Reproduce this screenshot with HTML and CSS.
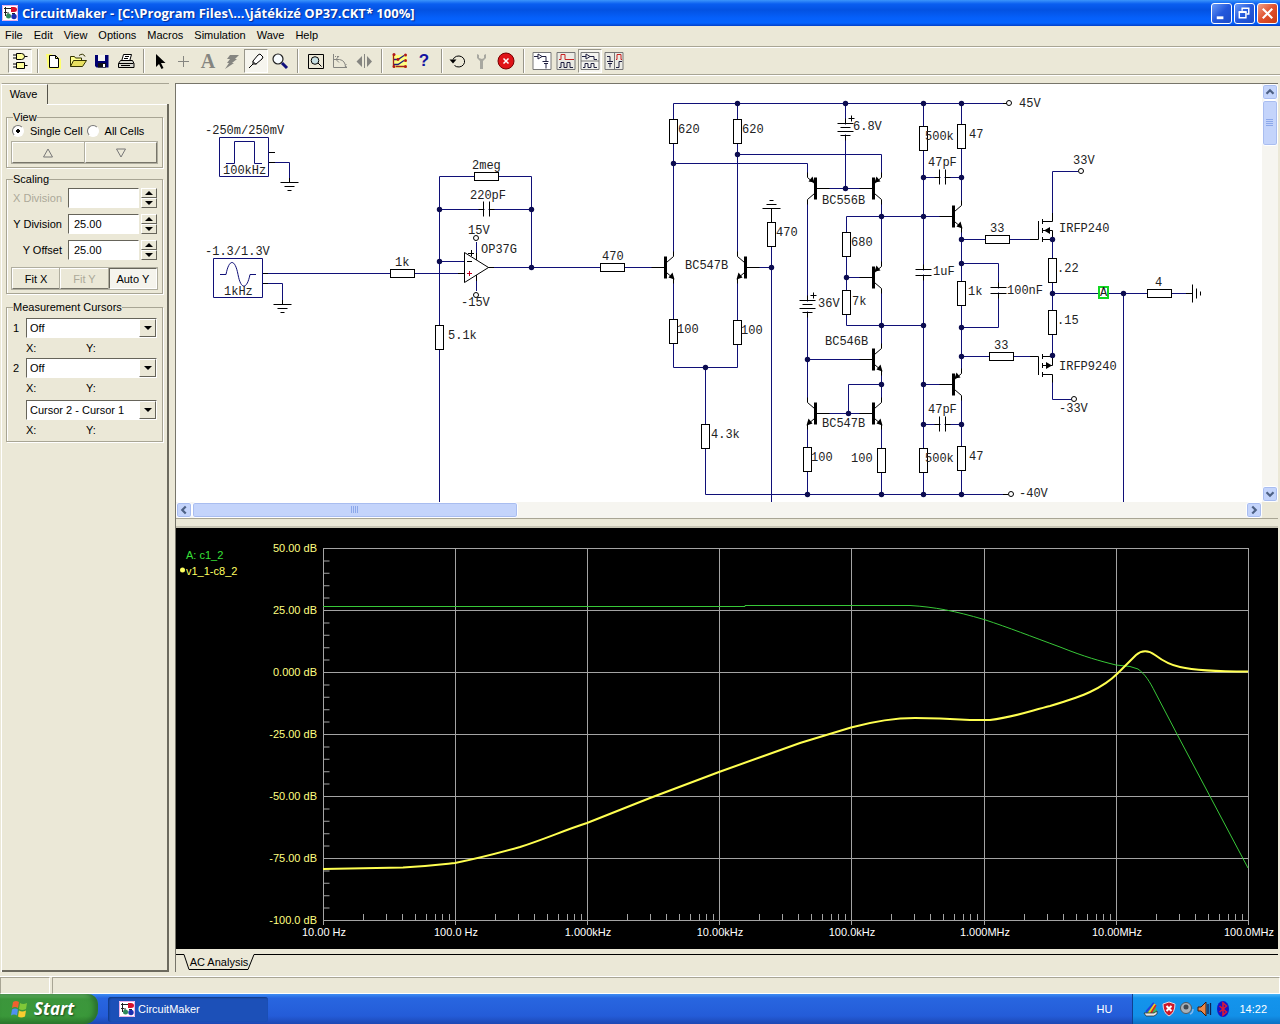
FILE: index.html
```html
<!DOCTYPE html>
<html lang="en">
  <head>
    <meta charset="utf-8" />
    <title>CircuitMaker</title>
    <link rel="stylesheet" href="styles.css">
  </head>

  <body>
    <!-- shared symbols -->
    <svg class="defs" width="0" height="0" aria-hidden="true">
      <defs>
        <symbol id="app" viewBox="0 0 16 16">
          <rect width="16" height="16" fill="#fff" />
          <path d="M0.5 0.5h15v15h-15z" fill="none" stroke="#e8b0e8" />
          <path d="M2 3.500h7M3.500 2v9M2 7.500h3M6 7v6M10 8.500h3" fill="none" stroke="#222" />
          <path d="M9 2h3q3 0 3 2.500t-3 2.500h-3z" fill="#d8102c" />
          <circle cx="6.500" cy="11" r="2.500" fill="#2d8a5a" />
          <circle cx="12" cy="11.500" r="2.700" fill="#1a2fb0" />
        </symbol>
        <!-- origin of the parts is their middle, transistors use the bar -->
        <g id="rh"><rect x="-12" y="-4" width="24" height="8" fill="#fff" stroke="#000" /></g>
        <g id="rv"><rect x="-4" y="-12" width="8" height="24" fill="#fff" stroke="#000" /></g>
        <g id="ch"><path d="M-2 0h4" stroke="#fff" stroke-width="3" /><path d="M-3-8v15M3-8v15M-8 0h5M3 0h5" stroke="#000" /></g>
        <g id="cv"><path d="M0-2v4" stroke="#fff" stroke-width="3" /><path d="M-8-3h16M-8 3h16M0-8v5M0 3v5" stroke="#000" /></g>
        <g id="bat"><path d="M0-5v10" stroke="#fff" stroke-width="3" /><path d="M-8-6h16M-5-2h10M-8 2h16M-5 6h10M0-11v5M0 6v5M3-11h6M6-14v6" stroke="#000" /></g>
        <g id="gnd"><path d="M-9 0h18M-5 4h10M-2 8h4" stroke="#000" /></g>
        <g id="npn"><path d="M-14 0h14M1-5l7-6v-5M1 5l7 6v5" fill="none" stroke="#000" /><path d="M0-11v22" stroke="#000" stroke-width="3" /><path d="M9 12l-6-2 4-5z" /></g>
        <g id="pnp"><path d="M-14 0h14M1-5l7-6v-5M1 5l7 6v5" fill="none" stroke="#000" /><path d="M0-11v22" stroke="#000" stroke-width="3" /><path d="M1-6l6-1-4-5z" /></g>
        <circle id="dot" r="2.700" fill="#0c0c50" />
        <circle id="term" r="2.500" fill="#fff" stroke="#000" />
        <path id="decade" d="M40 914v6M63 914v6M79 914v6M92 914v6M103 914v6M112 914v6M119 914v6M126 914v6" />
      </defs>
    </svg>

    <header class="titlebar">
      <svg class="app-icon" viewBox="0 0 16 16"><use href="#app" /></svg>
      <h1>CircuitMaker - [C:\Program Files\...\játékizé OP37.CKT* 100%]</h1>
      <button class="win" aria-label="Minimize"><svg viewBox="0 0 20 20"><path d="M5 14.500h7" stroke="#fff" stroke-width="3" /></svg></button>
      <button class="win" aria-label="Restore"><svg viewBox="0 0 20 20" fill="none" stroke="#fff"><path d="M7.500 7V4.500h7v6H12" stroke-width="1.500" /><path d="M4.500 8.500h7v6h-7z" stroke-width="1.500" /><path d="M4 8.500h8" stroke-width="2" /></svg></button>
      <button class="win close" aria-label="Close"><svg viewBox="0 0 20 20"><path d="M5 5l10 10M15 5L5 15" stroke="#fff" stroke-width="2.200" /></svg></button>
    </header>

    <nav class="menubar">
      <a href="#">File</a>
      <a href="#">Edit</a>
      <a href="#">View</a>
      <a href="#">Options</a>
      <a href="#">Macros</a>
      <a href="#">Simulation</a>
      <a href="#">Wave</a>
      <a href="#">Help</a>
    </nav>

    <div class="toolbar">
      <button class="tool on" aria-label="Parts"><svg viewBox="0 0 20 20" fill="#ffff9c" stroke="#000"><path d="M6.500 2.500h5q3 0 3 3t-3 3h-5zM6.500 11.500h8v6h-8zM3 4h3.500M3 7h3.500M14.500 5.500h3M3 13h3.500M3 16h3.500M14.500 14.500h3" /></svg></button>
      <span class="sep"></span>
      <button class="tool" aria-label="New"><svg viewBox="0 0 20 20"><path d="M2 3h5l10 5v10H4z" fill="#ffff70" /><path d="M5.500 4.500h6l3 3v9h-9zM11.500 4.500v3h3" fill="#fff" stroke="#000" /></svg></button>
      <button class="tool" aria-label="Open"><svg viewBox="0 0 20 20" stroke="#333300"><path d="M2.500 15.500v-10h4l1 1.500h6v3" fill="#ffff90" /><path d="M2.500 15.500l3-6h13l-4 6z" fill="#e8e060" /><path d="M11 4.500q4-3 6 1" fill="none" /></svg></button>
      <button class="tool" aria-label="Save"><svg viewBox="0 0 20 20"><path d="M3 4h13.500v12.500H4.500L3 15z" fill="#000070" /><path d="M6 4h7v6H6z" fill="#f4f4f0" /><path d="M6 12h8v4.500H6z" fill="#101018" /><path d="M11 13h2v3h-2z" fill="#fff" /></svg></button>
      <button class="tool" aria-label="Print"><svg viewBox="0 0 20 20" fill="#fff" stroke="#000"><path d="M5.500 10.500l2-7h8l-2 7zM9 5.500h4M8 7.500h4" /><path d="M2.500 12.500l2-3h12l1.500 3v4h-15.500z" fill="#d8d8d0" /><path d="M2.500 12.500h15M5 14.500h9" /></svg></button>
      <span class="sep"></span>
      <button class="tool" aria-label="Select"><svg viewBox="0 0 20 20"><path d="M6 3v13l3-3 2.500 5 2-1-2.500-5h4.500z" /></svg></button>
      <button class="tool" aria-label="Wire"><svg viewBox="0 0 20 20"><path d="M9.500 5v11M4 10.500h11" stroke="#858580" /></svg></button>
      <button class="tool letter" aria-label="Text">A</button>
      <button class="tool" aria-label="Delete"><svg viewBox="0 0 20 20"><path d="M8 4h9l-4 4h2l-5 4h2l-9 6 4-6H5l3-4H5z" fill="#858580" /></svg></button>
      <button class="tool on" aria-label="Probe"><svg viewBox="0 0 20 20" fill="#fff" stroke="#000"><path d="M3 17l4-4v-3l5-6 2-1 3 3-1 2-6 5H7z" /><path d="M7 10.500l3 3" /></svg></button>
      <button class="tool" aria-label="Zoom"><svg viewBox="0 0 20 20"><circle cx="8" cy="8" r="5" fill="#f8fcff" stroke="#222" stroke-width="1.200" /><path d="M12 12l5 5" stroke="#10107c" stroke-width="3" /></svg></button>
      <span class="sep wide"></span>
      <button class="tool" aria-label="Fit"><svg viewBox="0 0 20 20" fill="none" stroke="#000"><path d="M2.500 3.500h15v14h-15zM12 12l3.500 3.500" /><circle cx="9" cy="9.500" r="3.800" fill="#c8e0e4" /></svg></button>
      <button class="tool" aria-label="Rotate"><svg viewBox="0 0 20 20" fill="none" stroke="#858580"><path d="M3.500 3v13.500H17M3.500 8.500h6M9.500 8.500q6 1 6 8M9 5L6 8.500l3 3" /><path d="M5 5.500h4M16 13v4" stroke-dasharray="1 1" /></svg></button>
      <button class="tool" aria-label="Mirror"><svg viewBox="0 0 20 20" fill="#858580"><path d="M8 5v11l-5.500-5.500zM13 5v11l5-5.500zM10 3h1v14h-1z" /></svg></button>
      <span class="sep wide"></span>
      <button class="tool" aria-label="Netlist"><svg viewBox="0 0 20 20" fill="none"><path d="M2 4h15v13H3z" fill="#ffff80" /><path d="M4 8.500h4l6-4M4 13.500h4l6-4" stroke="#202080" stroke-width="1.300" /><path d="M3.500 4v11M6 15.500h9" stroke="#a02020" stroke-width="1.300" /><g fill="#b01818"><circle cx="4" cy="3.500" r="1.500" /><circle cx="15.500" cy="4" r="1.500" /><circle cx="8" cy="8.500" r="1.400" /><circle cx="15.500" cy="9.500" r="1.500" /><circle cx="4" cy="15.500" r="1.500" /><circle cx="15.500" cy="15.500" r="1.500" /></g></svg></button>
      <button class="tool help" aria-label="Help">?</button>
      <span class="sep"></span>
      <button class="tool" aria-label="Reset"><svg viewBox="0 0 20 20" fill="none" stroke="#000"><path d="M5 8.500a6 5.500 0 1 1 1.500 6" /><path d="M1.500 8.500h7l-3.500 4z" fill="#000" stroke="none" /></svg></button>
      <button class="tool" aria-label="Setup"><svg viewBox="0 0 20 20"><path d="M5 3v4l3 3v8h3v-8l3-3V3l-2 1v3l-2 1-3-1V4z" fill="#a8a8a0" /></svg></button>
      <button class="tool" aria-label="Stop"><svg viewBox="0 0 20 20"><circle cx="10" cy="10" r="8" fill="#e01418" stroke="#700" /><path d="M7.500 7.500l5 5M12.500 7.500l-5 5" stroke="#fff" stroke-width="1.500" /></svg></button>
      <span class="sep wide"></span>
      <button class="tool" aria-label="Schematic"><svg viewBox="0 0 20 20" fill="none" stroke="#202040"><path d="M1 1.500h18v17H1z" fill="#fff" stroke="#777" /><path d="M2 5.500h4M6 3v5l4-2.500zM10 5.500h4v5M10.500 10.500h6M12 12.500h4M14 12.500v5" /></svg></button>
      <button class="tool" aria-label="Waves"><svg viewBox="0 0 20 20" fill="none" stroke="#202040"><path d="M1 1.500h18v17H1z" fill="#ebebe4" stroke="#777" /><path d="M3 8.500h2v-5h4v5h9" stroke="#c82020" /><path d="M3 16.500h2v-5h3v5h3v-5h3v5h3" /></svg></button>
      <button class="tool on" aria-label="Split horizontal"><svg viewBox="0 0 20 20" fill="none" stroke="#202040"><path d="M1 1.500h18v17H1zM1 10h18" fill="#f4f4f0" stroke="#777" /><path d="M2 5.500h4M6 3v5l4-2.500zM10 5.500h4v3h3M3 16.500h2v-4h3v4h3v-4h3v4h3" /></svg></button>
      <button class="tool" aria-label="Split vertical"><svg viewBox="0 0 20 20" fill="none" stroke="#202040"><path d="M1 1.500h18v17H1zM10.500 1.500v17" fill="#ebebe4" stroke="#777" /><path d="M3 5.500h3v5M3 10.500h6M4 12.500h4M6 12.500v4M12 16.500h3v-6h3" /><path d="M12 8.500h1v-5h4v5h1" stroke="#c82020" /></svg></button>
    </div>

    <main class="workspace">
      <aside class="side">
        <div class="tabrow"><button class="tab">Wave</button></div>
        <div class="page">
          <fieldset class="view">
            <legend>View</legend>
            <div class="radios">
              <label><input type="radio" name="cell" checked> Single Cell</label>
              <label><input type="radio" name="cell"> All Cells</label>
            </div>
            <div class="buttons">
              <button class="btn" aria-label="Previous cell"><svg viewBox="0 0 12 12"><path d="M6 2l4.500 8h-9z" fill="none" stroke="#777" /></svg></button>
              <button class="btn" aria-label="Next cell"><svg viewBox="0 0 12 12"><path d="M6 10l4.500-8h-9z" fill="none" stroke="#777" /></svg></button>
            </div>
          </fieldset>

          <fieldset class="scaling">
            <legend>Scaling</legend>
            <div class="row off"><label for="xdiv">X Division</label><input id="xdiv" type="text"><span class="spin"><button aria-label="X up"><i class="up"></i></button><button aria-label="X down"><i class="down"></i></button></span></div>
            <div class="row"><label for="ydiv">Y Division</label><input id="ydiv" type="text" value="25.00"><span class="spin"><button aria-label="Y up"><i class="up"></i></button><button aria-label="Y down"><i class="down"></i></button></span></div>
            <div class="row"><label for="yoff">Y Offset</label><input id="yoff" type="text" value="25.00"><span class="spin"><button aria-label="Offset up"><i class="up"></i></button><button aria-label="Offset down"><i class="down"></i></button></span></div>
            <div class="buttons">
              <button class="btn">Fit X</button>
              <button class="btn" disabled>Fit Y</button>
              <button class="btn pressed">Auto Y</button>
            </div>
          </fieldset>

          <fieldset class="cursors">
            <legend>Measurement Cursors</legend>
            <div class="cursor"><label for="c1">1</label><span class="combo"><select id="c1"><option>Off</option></select><span class="arrow"><i class="down"></i></span></span></div>
            <div class="xy"><span>X:</span><span>Y:</span></div>
            <div class="cursor"><label for="c2">2</label><span class="combo"><select id="c2"><option>Off</option></select><span class="arrow"><i class="down"></i></span></span></div>
            <div class="xy last"><span>X:</span><span>Y:</span></div>
            <div class="cursor"><span></span><span class="combo"><select aria-label="Difference"><option>Cursor 2 - Cursor 1</option></select><span class="arrow"><i class="down"></i></span></span></div>
            <div class="xy"><span>X:</span><span>Y:</span></div>
          </fieldset>
        </div>
      </aside>

      <section class="docs">
        <div class="schematic">
          <div class="canvas">
            <svg width="1085" height="418" viewBox="176 84 1085 418" fill="none">
              <!-- wires -->
              <g class="wire">
                <path d="M219.500 137.500h49v39h-49zM226 163.500h8.500v-22h20v22h7.500M213.500 258.500h49v39h-49zM220 274.500h6c3-16 9-16 12 0s9 15 12 0h6" />
                <path d="M275 162.500h14.500v16M268 273.500H458M268 283.500h14.500v17" />
                <path d="M439.500 502V176.500H531.500V267.500M439.500 209.500H531.500M439.500 261.500H464M494 267.500H652M476.500 242v12M476.500 281v10" />
                <path d="M673.500 252V103.500H1003M737.500 103.500V252M673.500 163.500H807.500v10M737.500 154.500H881.500V173" />
                <path d="M673.500 283V367.500H737.500V283M705.500 367.500V494.500H1003M759 267.500H771.500M771.500 220V502" />
                <path d="M807.500 203V398M807.500 429V494.500M845.500 103.500V188.500M829 188.500H860" />
                <path d="M881.500 203V262M881.500 292V344M881.500 375V398M881.500 429V494.500M846.500 325.500V216.500H940M846.500 277.500H860M846.500 325.500H923.500" />
                <path d="M807.500 359.500H860M829 413.500H860M848.500 413.500V384.500H881.500" />
                <path d="M923.500 103.500V494.500M961.500 103.500V201M961.500 232V369M961.500 399V494.500M923.500 177.500H961.500M923.500 424.500H961.500M923.500 384.500H940" />
                <path d="M961.500 263.500H998.500V327.500H961.500M961.500 239.500H1030M961.500 356.500H1030" />
                <path d="M1078 171.500H1052.500V213M1052.500 240V356M1052.500 382V399.500H1071M1052.500 293.500H1186M1123.500 293.500V502" />
              </g>
              <!-- pins and parts -->
              <path d="M269 152.500h6M269 162.500h6M289.500 178v5M263 273.500h5M263 283.500h5M282.500 300v5M458 273.500h6M488 267.500h6M476.500 253v7M476.500 275v6M652 267.500h5M771.500 209v13M1003 103.500h4M1003 494.500h5M1186 293.500h6" stroke="#000" />
              <use href="#gnd" x="289.500" y="182.500" />
              <use href="#gnd" x="282.500" y="304.500" />
              <use href="#gnd" transform="translate(771.500 208.500) scale(1 -1)" />
              <use href="#gnd" transform="translate(1192.500 293.500) rotate(-90)" />
              <path d="M464.500 252.500v30l24-15z" fill="#fff" stroke="#000" />
              <path d="M468 253.500h6M471.500 250v6M467 261.500h5" stroke="#000" />
              <path d="M467 273.500h5M469.500 271v5" stroke="#c00020" />

              <use href="#rh" x="402.500" y="273.500" /><use href="#rh" x="486.500" y="176.500" /><use href="#rh" x="612.500" y="267.500" />
              <use href="#rh" x="997.500" y="239.500" /><use href="#rh" x="1001.500" y="356.500" /><use href="#rh" x="1159.500" y="293.500" />
              <use href="#rv" x="439.500" y="337.500" /><use href="#rv" x="673.500" y="131.500" /><use href="#rv" x="737.500" y="131.500" />
              <use href="#rv" x="673.500" y="331.500" /><use href="#rv" x="737.500" y="332.500" /><use href="#rv" x="705.500" y="436.500" />
              <use href="#rv" x="771.500" y="234.500" /><use href="#rv" x="846.500" y="244.500" /><use href="#rv" x="846.500" y="302.500" />
              <use href="#rv" x="807.500" y="459.500" /><use href="#rv" x="881.500" y="460.500" />
              <use href="#rv" x="923.500" y="138.500" /><use href="#rv" x="961.500" y="136.500" /><use href="#rv" x="961.500" y="293.500" />
              <use href="#rv" x="923.500" y="460.500" /><use href="#rv" x="961.500" y="458.500" />
              <use href="#rv" x="1052.500" y="270.500" /><use href="#rv" x="1052.500" y="322.500" />
              <use href="#ch" x="486.500" y="209.500" /><use href="#ch" x="942.500" y="177.500" /><use href="#ch" x="942.500" y="424.500" />
              <use href="#cv" x="923.500" y="272.500" /><use href="#cv" x="998.500" y="290.500" />
              <use href="#bat" x="845.500" y="129.500" /><use href="#bat" x="807.500" y="306.500" />

              <g fill="#000">
                <use href="#npn" x="665.500" y="267.500" />
                <use href="#npn" transform="translate(745.500 267.500) scale(-1 1)" />
                <use href="#pnp" transform="translate(815.500 188.500) scale(-1 1)" />
                <use href="#pnp" x="873.500" y="188.500" />
                <use href="#pnp" x="873.500" y="277.500" />
                <use href="#npn" x="873.500" y="359.500" />
                <use href="#npn" x="873.500" y="413.500" />
                <use href="#npn" transform="translate(815.500 413.500) scale(-1 1)" />
                <use href="#npn" x="953.500" y="216.500" />
                <use href="#pnp" x="953.500" y="384.500" />
              </g>
              <!-- mosfets -->
              <path d="M1030 239.500h8.500V221M1042.500 219v5M1042.500 228v5M1042.500 237v5M1042 221.500h10.500V213M1042 230.500h10.500v9M1042 239.500h10.500M1030 356.500h8.500V375M1042.500 354v5M1042.500 363v5M1042.500 372v5M1042 356.500h10.500v9h-10.500M1042 374.500h10.500v8" stroke="#000" />
              <path d="M1044 230.500l6-3.500v7zM1052 365.500l-6-3.500v7z" fill="#000" />

              <use href="#dot" x="439.500" y="209.500" /><use href="#dot" x="531.500" y="209.500" /><use href="#dot" x="439.500" y="261.500" /><use href="#dot" x="531.500" y="267.500" />
              <use href="#dot" x="737.500" y="103.500" /><use href="#dot" x="845.500" y="103.500" /><use href="#dot" x="923.500" y="103.500" /><use href="#dot" x="961.500" y="103.500" />
              <use href="#dot" x="737.500" y="154.500" /><use href="#dot" x="673.500" y="163.500" /><use href="#dot" x="771.500" y="267.500" /><use href="#dot" x="705.500" y="367.500" />
              <use href="#dot" x="845.500" y="188.500" /><use href="#dot" x="923.500" y="177.500" /><use href="#dot" x="961.500" y="177.500" /><use href="#dot" x="881.500" y="216.500" />
              <use href="#dot" x="923.500" y="216.500" /><use href="#dot" x="846.500" y="277.500" /><use href="#dot" x="961.500" y="239.500" /><use href="#dot" x="961.500" y="263.500" />
              <use href="#dot" x="881.500" y="325.500" /><use href="#dot" x="923.500" y="325.500" /><use href="#dot" x="961.500" y="327.500" /><use href="#dot" x="961.500" y="356.500" />
              <use href="#dot" x="807.500" y="359.500" /><use href="#dot" x="881.500" y="384.500" /><use href="#dot" x="923.500" y="384.500" /><use href="#dot" x="848.500" y="413.500" />
              <use href="#dot" x="923.500" y="424.500" /><use href="#dot" x="961.500" y="424.500" /><use href="#dot" x="807.500" y="494.500" /><use href="#dot" x="881.500" y="494.500" />
              <use href="#dot" x="923.500" y="494.500" /><use href="#dot" x="961.500" y="494.500" /><use href="#dot" x="1052.500" y="239.500" /><use href="#dot" x="1052.500" y="293.500" />
              <use href="#dot" x="1052.500" y="355.500" /><use href="#dot" x="1123.500" y="293.500" />
              <use href="#term" x="476" y="238" /><use href="#term" x="476" y="295" /><use href="#term" x="1009" y="103" /><use href="#term" x="1011" y="494" />
              <use href="#term" x="1081" y="171" /><use href="#term" x="1074" y="399" />
              <rect x="1099" y="287" width="9" height="11" fill="#fff" stroke="#10d820" stroke-width="2" />

              <g class="part-text">
                <text x="205" y="134">-250m/250mV</text><text x="223" y="174">100kHz</text>
                <text x="205" y="255">-1.3/1.3V</text><text x="224" y="295">1kHz</text>
                <text x="395" y="266">1k</text><text x="448" y="339">5.1k</text>
                <text x="472" y="169">2meg</text><text x="470" y="199">220pF</text>
                <text x="468" y="234">15V</text><text x="461" y="306">-15V</text><text x="481" y="253">OP37G</text>
                <text x="602" y="260">470</text><text x="678" y="133">620</text><text x="742" y="133">620</text>
                <text x="685" y="269">BC547B</text><text x="677" y="333">100</text><text x="741" y="334">100</text>
                <text x="711" y="438">4.3k</text><text x="776" y="236">470</text>
                <text x="822" y="204">BC556B</text><text x="853" y="130">6.8V</text><text x="818" y="307">36V</text>
                <text x="851" y="246">680</text><text x="852" y="305">7k</text><text x="825" y="345">BC546B</text>
                <text x="822" y="427">BC547B</text><text x="811" y="461">100</text><text x="851" y="462">100</text>
                <text x="925" y="140">500k</text><text x="925" y="462">500k</text><text x="969" y="138">47</text><text x="969" y="460">47</text>
                <text x="928" y="166">47pF</text><text x="928" y="413">47pF</text><text x="933" y="275">1uF</text>
                <text x="968" y="295">1k</text><text x="1007" y="294">100nF</text><text x="990" y="232">33</text><text x="994" y="349">33</text>
                <text x="1019" y="107">45V</text><text x="1019" y="497">-40V</text><text x="1073" y="164">33V</text><text x="1059" y="412">-33V</text>
                <text x="1059" y="232">IRFP240</text><text x="1059" y="370">IRFP9240</text>
                <text x="1057" y="272">.22</text><text x="1057" y="324">.15</text><text x="1155" y="286">4</text><text x="1100" y="296">A</text>
              </g>
            </svg>
          </div>
          <div class="vscroll">
            <button aria-label="Scroll up"><svg viewBox="0 0 16 16"><path d="M4 10l4-4 4 4" /></svg></button>
            <div class="thumb"><svg viewBox="0 0 8 8"><path d="M0 .5h7M0 2.500h7M0 4.500h7M0 6.500h7" /></svg></div>
            <div class="track"></div>
            <button aria-label="Scroll down"><svg viewBox="0 0 16 16"><path d="M4 6l4 4 4-4" /></svg></button>
          </div>
          <div class="hscroll">
            <button aria-label="Scroll left"><svg viewBox="0 0 16 16"><path d="M10 4L6 8l4 4" /></svg></button>
            <div class="thumb"><svg viewBox="0 0 8 8"><path d="M.5 0v7M2.500 0v7M4.500 0v7M6.500 0v7" /></svg></div>
            <div class="track"></div>
            <button aria-label="Scroll right"><svg viewBox="0 0 16 16"><path d="M6 4l4 4-4 4" /></svg></button>
          </div>
        </div>

        <div class="plot">
          <svg viewBox="176 528 1102 421" preserveAspectRatio="xMinYMin meet" fill="none">
            <g class="grid">
              <path d="M323 548.500H1248M323 610.500H1248M323 672.500H1248M323 734.500H1248M323 796.500H1248M323 858.500H1248M323 920.500H1248" />
              <path d="M323.500 548V925M455.500 548V925M587.500 548V925M719.500 548V925M851.500 548V925M984.500 548V925M1116.500 548V925M1248.500 548V925" />
              <path class="minor" d="M326.500 548V920" />
              <use href="#decade" x="323.500" /><use href="#decade" x="455.500" /><use href="#decade" x="587.500" /><use href="#decade" x="719.500" />
              <use href="#decade" x="851.500" /><use href="#decade" x="984.500" /><use href="#decade" x="1116.500" />
            </g>
            <path class="trace-a" d="M323 606.500H745V605.500H910C935 607 955 611 984 619.500C1010 628 1030 636 1060 647C1085 657 1100 661 1116 665L1130 666.500L1138 669C1145 674 1150 682 1155 692L1178 736L1213 802L1248 868" />
            <path class="trace-b" d="M323 869L350 868.500L403 867.500C430 866 445 864 455 863C475 859 495 854 520 847C545 839 565 830 587 823L650 798L719 772L800 743L851 727.500C875 721 895 718 915 718L940 718.500L970 720H990C1015 717 1030 711 1050 706C1070 700 1080 697 1090 692C1105 685 1112 679 1118 673L1136 655C1142 650 1148 650 1155 655C1163 661 1170 665 1180 667C1195 670.500 1215 671.500 1248 671.500" />
            <g class="ylab">
              <text x="317" y="552">50.00 dB</text><text x="317" y="614">25.00 dB</text><text x="317" y="676">0.000 dB</text><text x="317" y="738">-25.00 dB</text>
              <text x="317" y="800">-50.00 dB</text><text x="317" y="862">-75.00 dB</text><text x="317" y="924">-100.0 dB</text>
            </g>
            <g class="xlab">
              <text x="324" y="936">10.00 Hz</text><text x="456" y="936">100.0 Hz</text><text x="588" y="936">1.000kHz</text><text x="720" y="936">10.00kHz</text>
              <text x="852" y="936">100.0kHz</text><text x="985" y="936">1.000MHz</text><text x="1117" y="936">10.00MHz</text><text x="1249" y="936">100.0MHz</text>
            </g>
            <text class="name-a" x="186" y="559">A: c1_2</text>
            <text class="name-b" x="186" y="575">v1_1-c8_2</text>
            <circle cx="182.500" cy="570" r="2.500" fill="#ffff60" />
          </svg>
        </div>

        <div class="sheets">
          <span class="lead"></span>
          <button class="sheet"><svg viewBox="0 0 72 18"><path d="M0 .5h1L6 15.500H65L71 .5h1" /></svg><span>AC Analysis</span></button>
          <span class="rest"></span>
        </div>
      </section>
    </main>

    <footer class="status"><span></span><span></span></footer>

    <div class="taskbar">
      <button class="start">
        <svg viewBox="0 0 20 20"><path d="M3 3q3-2 6 0l-1 6q-3-2-6 0z" fill="#f06030" /><path d="M10 4q3 2 7 0l-1 6q-4 2-7 0z" fill="#80c838" /><path d="M2 10.500q3-2 6 0l-1 6q-3-2-6 0z" fill="#5090f0" /><path d="M9 11.500q3 2 7 0l-1 6q-4 2-7 0z" fill="#f8cc30" /></svg>
        Start
      </button>
      <button class="task"><svg viewBox="0 0 16 16"><use href="#app" /></svg>CircuitMaker</button>
      <span class="lang">HU</span>
      <div class="tray">
        <svg viewBox="0 0 16 16"><path d="M4 11l7-9 3 8-3 3H3z" fill="#40b060" /><path d="M3 11l8-9" stroke="#2040e0" stroke-width="2" /><path d="M6 12l6-9" stroke="#e8d020" stroke-width="2" /><path d="M8 12l5-8" stroke="#e02020" stroke-width="1.500" /><path d="M1 12h10l3-2v3l-3 2H3z" fill="#e8e8e8" stroke="#222" stroke-width=".7" /></svg>
        <svg viewBox="0 0 16 16"><path d="M8 1l6 2q0 9-6 12Q2 12 2 3z" fill="#d01828" stroke="#e8d8e0" /><path d="M5.500 5l5 5M10.500 5l-5 5" stroke="#fff" stroke-width="2" /></svg>
        <svg viewBox="0 0 16 16"><circle cx="7" cy="7" r="5.500" fill="#a8b0b8" stroke="#505860" /><circle cx="7" cy="6" r="2.500" fill="#404850" /><path d="M11 13q3-1 3-5" fill="none" stroke="#80b8f0" stroke-width="1.500" /></svg>
        <svg viewBox="0 0 16 16"><path d="M1 6h3l5-5v14l-5-5H1z" fill="#e88848" stroke="#401808" /><path d="M11 3v10M13.500 2v12" stroke="#102050" stroke-width="1.300" /></svg>
        <svg viewBox="0 0 16 16"><ellipse cx="8" cy="8" rx="6" ry="8" fill="#1414c8" /><path d="M4.500 5l7 6-3.500 3V2l3.500 3-7 6" fill="none" stroke="#d81838" stroke-width="1.600" /></svg>
        <time>14:22</time>
      </div>
    </div>
  </body>
</html>
```
FILE: styles.css
```css
* {
  box-sizing: border-box;
}

body {
  display: flex;
  flex-direction: column;
  height: 100vh;
  margin: 0;
  overflow: hidden;
  background: #ebe8d7;
  color: #000;
  font: 11px/14px "Liberation Sans", Arial, sans-serif;
}

button,
input,
select {
  margin: 0;
  padding: 0;
  font: inherit;
  color: inherit;
}

button {
  border: 0;
  background: none;
}

.defs {
  position: absolute;
}

/* title bar */
.titlebar {
  display: flex;
  align-items: center;
  gap: 2px;
  height: 26px;
  padding: 0 2px;
  background: linear-gradient(#3c95fb 0, #0a5ef0 4px, #0352e2 10px, #0560fb 18px, #0564ff 23px, #0340c8 26px);
}
.app-icon {
  width: 16px;
  height: 16px;
}
.titlebar h1 {
  flex: 1;
  margin: 0 0 0 2px;
  color: #fff;
  font: bold 13px/18px "Open Sans", "Trebuchet MS", sans-serif;
  text-shadow: 1px 1px 1px #0a2a90;
  white-space: nowrap;
}
.win {
  width: 21px;
  height: 21px;
  border: 1px solid #fff;
  border-radius: 3px;
  background: linear-gradient(135deg, #6b9bf8, #2358dc 50%, #1c4cc8);
}
.win svg {
  display: block;
  width: 19px;
  height: 19px;
}
.close {
  background: linear-gradient(135deg, #f0a088, #e0502c 50%, #c83c14);
}

/* menu */
.menubar {
  display: flex;
  gap: 11px;
  height: 21px;
  padding: 2px 5px;
  border-bottom: 1px solid #a8a594;
}
.menubar a {
  color: #000;
  text-decoration: none;
}

/* toolbar */
.toolbar {
  display: flex;
  align-items: center;
  height: 28px;
  padding-left: 8px;
  border-top: 1px solid #fff;
  border-bottom: 1px solid #a8a594;
}
.tool {
  display: flex;
  align-items: center;
  justify-content: center;
  width: 24px;
  height: 24px;
}
.tool svg {
  flex: none;
  width: 20px;
  height: 20px;
}
.tool.on {
  border: 1px solid;
  border-color: #98968a #fff #fff #98968a;
  background: #f6f5ee;
}
.letter {
  color: #858580;
  font: bold 20px/24px "Liberation Serif", serif;
}
.help {
  color: #1414a0;
  font: bold 17px/24px "Liberation Sans", sans-serif;
}
.sep {
  width: 10px;
  height: 24px;
  background: linear-gradient(90deg, #98968a 1px, #fff 1px, #fff 2px, transparent 2px) 5px 0 no-repeat;
}
.sep.wide {
  width: 12px;
}

.workspace {
  display: flex;
  flex: 1;
  min-height: 0;
  padding: 7px 2px 4px 1px;
  border-top: 1px solid #fff;
}

/* left panel */
.side {
  display: flex;
  flex-direction: column;
  width: 168px;
  margin-right: 6px;
  border-left: 1px solid #fff;
  border-top: 1px solid #a8a594;
}
.tabrow {
  display: flex;
}
.tab {
  width: 46px;
  height: 20px;
  padding: 0 2px 2px 0;
  border-top: 1px solid #fff;
  border-right: 1px solid #55534a;
}
.page {
  flex: 1;
  padding: 7px 4px;
  border-right: 2px solid #6c6a5e;
  border-bottom: 2px solid #6c6a5e;
  background: linear-gradient(#fff, #fff) 45px 0 / 100% 1px no-repeat;
}
fieldset {
  min-width: 0;
  margin: 0 0 5px;
  padding: 0 5px;
  border: 1px solid #a8a594;
  box-shadow: inset 1px 0 #fff, 1px 1px #fff;
}
legend {
  margin-left: 1px;
  padding: 0;
  line-height: 12px;
}
.view {
  height: 57px;
}
.radios {
  display: flex;
  gap: 4px;
  padding: 1px 0 4px;
  white-space: nowrap;
}
.radios label {
  display: flex;
  align-items: center;
  gap: 6px;
}
.radios input {
  appearance: none;
  width: 12px;
  height: 12px;
  border: 1px solid;
  border-color: #777 #fff #fff #777;
  border-radius: 50%;
  background: #fff;
}
.radios input:checked {
  background: radial-gradient(circle, #000 2px, #fff 2px);
}
.buttons {
  display: flex;
}
.btn {
  flex: 1;
  height: 21px;
  border: 1px solid;
  border-color: #fff #77756a #77756a #fff;
  box-shadow: 0 0 0 1px #b0ae9f;
}
.btn svg {
  display: block;
  width: 12px;
  height: 12px;
  margin: 0 auto;
}
.btn:disabled {
  color: #aca899;
}
.pressed {
  border-color: #66645a #fff #fff #66645a;
  background: #f5f4ed;
}
.scaling {
  height: 121px;
  margin-bottom: 7px;
}
.row {
  display: flex;
  align-items: center;
  height: 20px;
  margin: 3px 0 6px;
}
.row label {
  flex: 1;
  padding-right: 6px;
  text-align: right;
  white-space: nowrap;
}
.row.off label {
  color: #aca899;
}
.row input {
  width: 71px;
  height: 20px;
  padding: 0 5px;
  border: 1px solid;
  border-color: #66645a #fff #fff #66645a;
  background: #fff;
}
.spin {
  display: grid;
  width: 16px;
  height: 20px;
  margin-left: 2px;
}
.spin button {
  display: grid;
  place-items: center;
  border: 1px solid;
  border-color: #fff #66645a #66645a #fff;
}
.up,
.down {
  border: 4px solid transparent;
}
.up {
  border-top: 0;
  border-bottom-color: #000;
}
.down {
  border-bottom: 0;
  border-top-color: #000;
}
.scaling .buttons {
  padding-top: 2px;
}
.cursors {
  height: 141px;
  padding-top: 2px;
}
.cursor {
  display: grid;
  grid-template-columns: 14px 1fr;
  align-items: center;
  padding-top: 3px;
}
.cursor label {
  padding-left: 1px;
}
.combo {
  display: flex;
  height: 20px;
  border: 1px solid;
  border-color: #66645a #fff #fff #66645a;
  background: #fff;
}
.combo select {
  appearance: none;
  flex: 1;
  min-width: 0;
  padding-left: 3px;
  border: 0;
  background: none;
}
.arrow {
  display: grid;
  place-items: center;
  width: 17px;
  border: 1px solid;
  border-color: #fff #66645a #66645a #fff;
  background: #ebe8d7;
}
.xy {
  display: grid;
  grid-template-columns: 60px 1fr;
  padding: 4px 0 0 14px;
  line-height: 13px;
}
.xy.last {
  padding-bottom: 2px;
}

/* documents */
.docs {
  display: flex;
  flex: 1;
  flex-direction: column;
  min-width: 0;
  border-left: 1px solid #77756a;
}
.schematic {
  display: grid;
  grid-template: 418px 16px / 1fr 16px;
  border-top: 1px solid #77756a;
  border-bottom: 1px solid #a8a594;
}
.canvas {
  min-width: 0;
  overflow: hidden;
  background: #fff;
}
.canvas svg {
  display: block;
}
.wire {
  stroke: #101078;
}
.part-text {
  fill: #222;
  font: 12px "Liberation Mono", "Courier New", monospace;
}
.vscroll,
.hscroll {
  display: flex;
  background: #f6f5f0;
}
.vscroll {
  flex-direction: column;
}
.vscroll button,
.hscroll button,
.thumb {
  display: grid;
  place-items: center;
  border: 1px solid #fff;
  border-radius: 3px;
  background: #c4d4fb;
  box-shadow: inset 0 0 0 1px #a9bdf0;
}
.vscroll button,
.hscroll button {
  width: 16px;
  height: 16px;
}
.vscroll button svg,
.hscroll button svg {
  width: 14px;
  height: 14px;
  fill: none;
  stroke: #4d6185;
  stroke-width: 2.5;
}
.thumb svg {
  width: 8px;
  height: 8px;
  stroke: #8ca8ea;
}
.vscroll .thumb {
  height: 46px;
}
.hscroll .thumb {
  width: 30%;
}
.track {
  flex: 1;
}

.plot {
  flex: 1;
  min-height: 0;
  margin-top: 7px;
  border-top: 2px solid #c8c5b4;
  background: #000;
}
.plot svg {
  display: block;
  width: 100%;
  height: 100%;
}
.plot text {
  font: 11px "Liberation Sans", Arial, sans-serif;
}
.grid {
  stroke: #a4a4a4;
}
.minor {
  stroke-width: 6;
  stroke-dasharray: 1 11.4;
}
.trace-a {
  stroke: #38c838;
}
.trace-b {
  stroke: #ffff50;
  stroke-width: 2;
}
.ylab {
  fill: #ffff80;
  text-anchor: end;
}
.xlab {
  fill: #fff;
  text-anchor: middle;
}
.name-a {
  fill: #38e038;
}
.name-b {
  fill: #ffff60;
}

/* sheet tab under the plot */
.sheets {
  display: flex;
  height: 23px;
  padding-top: 5px;
}
.lead {
  width: 7px;
}
.rest {
  flex: 1;
}
.lead,
.rest {
  border-top: 1px solid #000;
}
.sheet {
  display: grid;
  width: 72px;
  height: 18px;
}
.sheet svg,
.sheet span {
  grid-area: 1 / 1;
}
.sheet svg {
  width: 72px;
  height: 18px;
  fill: none;
  stroke: #000;
}
.sheet span {
  padding-top: 1px;
  white-space: nowrap;
}

.status {
  display: flex;
  gap: 2px;
  height: 18px;
  border-top: 1px solid #fff;
}
.status span {
  flex: 1;
  border: 1px solid;
  border-color: #a8a594 #fff #fff #a8a594;
}
.status span:first-child {
  flex: 0 0 50px;
}

/* taskbar */
.taskbar {
  display: flex;
  align-items: center;
  height: 30px;
  background: linear-gradient(#3c8cf4 0, #2866e0 4px, #245cd8 22px, #1c48b4 30px);
  color: #fff;
}
.start {
  display: flex;
  align-items: center;
  gap: 4px;
  width: 98px;
  height: 30px;
  padding: 0 0 0 10px;
  border-radius: 0 10px 14px 0;
  background: linear-gradient(#68b468 0, #3c963c 5px, #3a983a 22px, #2c7a2c 30px);
  box-shadow: inset -4px 0 5px #2a7030;
  font: italic bold 17px/28px "Open Sans", sans-serif;
  text-shadow: 1px 1px 2px #1a4a1a;
}
.start svg {
  width: 20px;
  height: 20px;
}
.task {
  display: flex;
  align-items: center;
  gap: 3px;
  width: 160px;
  height: 25px;
  margin-left: 10px;
  padding-left: 11px;
  border-radius: 3px;
  background: #1c50b8;
  box-shadow: inset 1px 1px 2px #103880;
}
.task svg {
  width: 16px;
  height: 16px;
}
.lang {
  margin: 0 20px 0 auto;
}
.tray {
  display: flex;
  align-items: center;
  gap: 2px;
  height: 30px;
  padding: 0 13px 0 10px;
  border-left: 1px solid #104090;
  background: linear-gradient(#48b4f8 0, #1494ec 4px, #1290e8 22px, #0c70c4 30px);
}
.tray svg {
  width: 16px;
  height: 16px;
}
.tray time {
  margin-left: 6px;
}
```
